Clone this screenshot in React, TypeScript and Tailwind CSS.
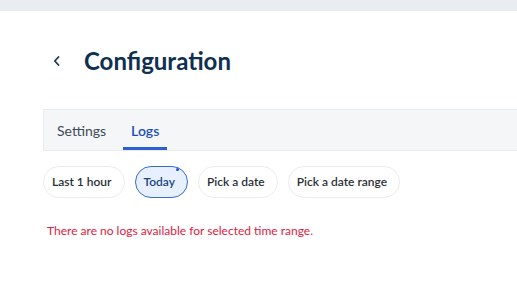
import React from "react";

export default function App() {
  const chips = [
    { label: "Last 1 hour", active: false },
    { label: "Today", active: true },
    { label: "Pick a date", active: false },
    { label: "Pick a date range", active: false },
  ];
  return (
    <div className="w-[517px] h-[296px] overflow-hidden bg-white" style={{ fontFamily: '"Lato", "Noto Sans", sans-serif' }}>
      <div className="h-[11px] bg-[#e9edf2]" />
      <div className="pl-[43px]">
        <div className="flex items-center h-[98px]">
          <svg width="10" height="12" viewBox="0 0 10 12" className="ml-[9px] mt-[2px]">
            <path d="M6.5 2 L2.8 6 L6.5 10" fill="none" stroke="#1e3a5a" strokeWidth="1.8" strokeLinecap="round" strokeLinejoin="round" />
          </svg>
          <h1 className="ml-[22px] text-[24px] font-bold text-[#10304f] mt-[1px]">Configuration</h1>
        </div>
        <div className="h-[42px] bg-[#f5f6f8] border border-[#e9ebef] border-r-0 flex items-stretch pl-[12px]">
          <div className="px-[1px] flex items-center text-[14px] text-[#3d4a57]">Settings</div>
          <div className="ml-[16px] px-[8px] flex items-center text-[14px] font-semibold text-[#1d4fb8] border-b-[3px] border-[#2d5fd3] pt-[3px]">Logs</div>
        </div>
        <div className="flex gap-[10px] mt-[15px]">
          {chips.map((c) => (
            <div
              key={c.label}
              className={
                "relative h-[32px] pl-[8px] pr-[12px] flex items-center rounded-full text-[12px] font-semibold border " +
                (c.active
                  ? "bg-[#e6f0ff] border-[#3b6ad6] text-[#22447e]"
                  : "bg-white border-[#ececec] text-[#2b2f36]")
              }
            >
              {c.label}
              {c.active && <span className="absolute right-[8px] top-[1px] w-[3px] h-[3px] rounded-full bg-[#1d4fd0]" />}
            </div>
          ))}
        </div>
        <div className="mt-[24px] ml-[4px] text-[12px] text-[#e02040]">There are no logs available for selected time range.</div>
      </div>
    </div>
  );
}
